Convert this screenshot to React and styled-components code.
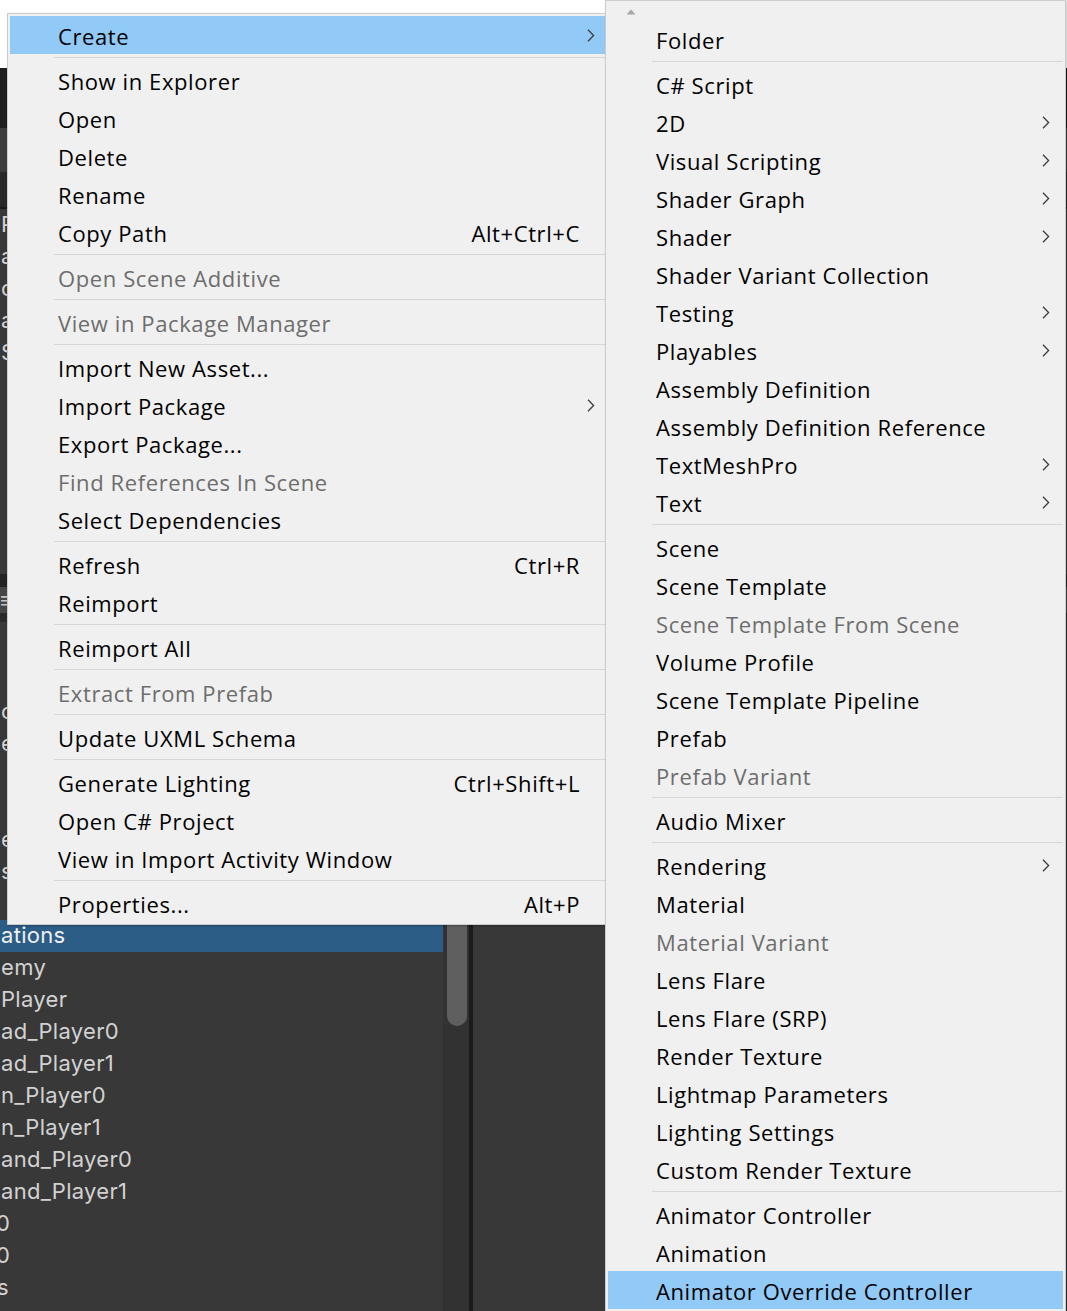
import React from 'react'
import styled, { createGlobalStyle } from 'styled-components'

const GlobalStyle = createGlobalStyle`
  html, body {
    margin: 0;
    padding: 0;
    background: #ffffff;
    overflow: hidden;
  }
`

const Page = styled.div`
  position: relative;
  width: 1067px;
  height: 1311px;
  overflow: hidden;
  background: #ffffff;
  display: flex;
  flex-direction: column;
`

const TopGap = styled.div`
  height: 68px;
  flex: none;
  background: #ffffff;
`

const Editor = styled.div`
  flex: 1;
  display: flex;
  flex-direction: column;
  background: #383838;
  font-family: Inter, "Noto Sans", sans-serif;
  font-size: 22px;
  letter-spacing: 0.3px;
  color: #d2d2d2;
`

const Bar = styled.div`
  flex: none;
  height: ${props => props.$h}px;
  background: ${props => props.$bg};
  border-bottom: ${props => props.$line ? '2px solid #1b1b1b' : 'none'};
  display: flex;
  align-items: center;
  color: #c4c4c4;
`

const RowList = styled.div`
  display: flex;
  flex-direction: column;
  padding-top: ${props => props.$pad || 0}px;
`

const Row = styled.div`
  height: 32px;
  flex: none;
  display: flex;
  align-items: center;
  white-space: nowrap;
  overflow: hidden;
  padding-left: 1px;
  padding-bottom: 3px;
  box-sizing: border-box;
  text-indent: ${props => props.$shift || 0}px;
  background: ${props => props.$selected ? '#2c5d87' : 'transparent'};
  color: ${props => props.$selected ? '#f0f0f0' : '#d2d2d2'};
`

const HierarchySection = styled.div`
  height: 365px;
  flex: none;
  overflow: hidden;
`

const ProjectSection = styled.div`
  flex: 1;
  display: flex;
  min-height: 0;
`

const ListPane = styled.div`
  width: 443px;
  flex: none;
  overflow: hidden;
`

const ScrollTrack = styled.div`
  width: 26px;
  flex: none;
  background: #323232;
  padding: 20px 2px 0 4px;
  box-sizing: border-box;
`

const ScrollThumb = styled.div`
  height: 384px;
  background: #5f5f5f;
  border-radius: 10px;
`

const Divider = styled.div`
  width: 4px;
  flex: none;
  background: #1b1b1b;
`

const RightPane = styled.div`
  flex: 1;
  background: #383838;
  border-right: 1px solid #2a2a2a;
`

const Menu = styled.div`
  position: absolute;
  left: ${props => props.$left}px;
  top: ${props => props.$top}px;
  width: ${props => props.$width}px;
  box-sizing: border-box;
  background: #f0f0f0;
  border: 1px solid #cccccc;
  padding: 2px;
  box-shadow: 1px 1px 2px rgba(0, 0, 0, 0.25);
  font-family: "Open Sans", "Noto Sans", sans-serif;
  font-size: 22px;
  letter-spacing: 0.6px;
  color: #000000;
  display: flex;
  flex-direction: column;
`

const ScrollUp = styled.div`
  height: 17px;
  display: flex;
  align-items: center;
  padding-left: 18px;
  box-sizing: border-box;
`

const Item = styled.div`
  height: 38px;
  flex: none;
  display: flex;
  align-items: center;
  padding-left: 48px;
  padding-top: 2px;
  box-sizing: border-box;
  background: ${props => props.$active ? '#91c9f7' : 'transparent'};
  color: ${props => props.$disabled ? '#6d6d6d' : '#000000'};
  white-space: nowrap;
`

const Label = styled.span`
  flex: 1;
  line-height: 1;
`

const Shortcut = styled.span`
  line-height: 1;
`

const ArrowCell = styled.span`
  width: 28px;
  flex: none;
  display: flex;
  justify-content: flex-end;
  padding-right: 13px;
  padding-bottom: 2px;
  box-sizing: border-box;
`

const Separator = styled.div`
  height: 1px;
  margin: 3px 0 3px 44px;
  background: #d7d7d7;
  flex: none;
`

const Chevron = () => (
  <svg width='8' height='13' viewBox='0 0 8 13'>
    <path d='M1 0.8 L6.6 6.5 L1 12.2' fill='none' stroke='#3c3c3c' strokeWidth='1.3' />
  </svg>
)

const UpTriangle = () => (
  <svg width='10' height='6' viewBox='0 0 10 6'>
    <path d='M0.5 5.5 L5 0.5 L9.5 5.5 Z' fill='#a6a6a6' />
  </svg>
)

const leftItems = [
  { label: 'Create', sub: true, active: true },
  '-',
  { label: 'Show in Explorer' },
  { label: 'Open' },
  { label: 'Delete' },
  { label: 'Rename' },
  { label: 'Copy Path', key: 'Alt+Ctrl+C' },
  '-',
  { label: 'Open Scene Additive', disabled: true },
  '-',
  { label: 'View in Package Manager', disabled: true },
  '-',
  { label: 'Import New Asset...' },
  { label: 'Import Package', sub: true },
  { label: 'Export Package...' },
  { label: 'Find References In Scene', disabled: true },
  { label: 'Select Dependencies' },
  '-',
  { label: 'Refresh', key: 'Ctrl+R' },
  { label: 'Reimport' },
  '-',
  { label: 'Reimport All' },
  '-',
  { label: 'Extract From Prefab', disabled: true },
  '-',
  { label: 'Update UXML Schema' },
  '-',
  { label: 'Generate Lighting', key: 'Ctrl+Shift+L' },
  { label: 'Open C# Project' },
  { label: 'View in Import Activity Window' },
  '-',
  { label: 'Properties...', key: 'Alt+P' }
]

const rightItems = [
  { label: 'Folder' },
  '-',
  { label: 'C# Script' },
  { label: '2D', sub: true },
  { label: 'Visual Scripting', sub: true },
  { label: 'Shader Graph', sub: true },
  { label: 'Shader', sub: true },
  { label: 'Shader Variant Collection' },
  { label: 'Testing', sub: true },
  { label: 'Playables', sub: true },
  { label: 'Assembly Definition' },
  { label: 'Assembly Definition Reference' },
  { label: 'TextMeshPro', sub: true },
  { label: 'Text', sub: true },
  '-',
  { label: 'Scene' },
  { label: 'Scene Template' },
  { label: 'Scene Template From Scene', disabled: true },
  { label: 'Volume Profile' },
  { label: 'Scene Template Pipeline' },
  { label: 'Prefab' },
  { label: 'Prefab Variant', disabled: true },
  '-',
  { label: 'Audio Mixer' },
  '-',
  { label: 'Rendering', sub: true },
  { label: 'Material' },
  { label: 'Material Variant', disabled: true },
  { label: 'Lens Flare' },
  { label: 'Lens Flare (SRP)' },
  { label: 'Render Texture' },
  { label: 'Lightmap Parameters' },
  { label: 'Lighting Settings' },
  { label: 'Custom Render Texture' },
  '-',
  { label: 'Animator Controller' },
  { label: 'Animation' },
  { label: 'Animator Override Controller', active: true }
]

// only the first few pixels of these rows peek out from behind the menu
const hierarchyRows = ['P', 'a', 'c', 'a', 'S', '', '', '', '', '', '', '']

const projectRows = [
  { text: '' },
  { text: '' },
  { text: 'c' },
  { text: 'e' },
  { text: '' },
  { text: '' },
  { text: 'e' },
  { text: 's' },
  { text: '' },
  { text: 'ations', selected: true },
  { text: 'emy' },
  { text: 'Player' },
  { text: 'ad_Player0' },
  { text: 'ad_Player1' },
  { text: 'n_Player0' },
  { text: 'n_Player1' },
  { text: 'and_Player0' },
  { text: 'and_Player1' },
  { text: '0', shift: -5 },
  { text: '0', shift: -5 },
  { text: 's', shift: -4 },
  { text: '' }
]

function MenuList({ items }) {
  return items.map((it, i) => {
    if (it === '-') return <Separator key={i} />
    return (
      <Item key={i} $active={it.active} $disabled={it.disabled}>
        <Label>{it.label}</Label>
        {it.key && <Shortcut>{it.key}</Shortcut>}
        <ArrowCell>{it.sub && <Chevron />}</ArrowCell>
      </Item>
    )
  })
}

export default function App() {
  return <>
    <GlobalStyle />
    <Page>
      <TopGap />
      <Editor>
        <Bar $h={60} $bg='#1e1e1e' />
        <Bar $h={44} $bg='#3c3c3c' />
        <Bar $h={35} $bg='#282828' $line />
        <HierarchySection>
          <RowList>
            {hierarchyRows.map((r, i) => <Row key={i}>{r}</Row>)}
          </RowList>
        </HierarchySection>
        <Bar $h={13} $bg='#232323' />
        <Bar $h={26} $bg='#464646'>&#8801;</Bar>
        <Bar $h={9} $bg='#2a2a2a' />
        <ProjectSection>
          <ListPane>
            <RowList $pad={10}>
              {projectRows.map((r, i) => (
                <Row key={i} $selected={r.selected} $shift={r.shift}>{r.text}</Row>
              ))}
            </RowList>
          </ListPane>
          <ScrollTrack>
            <ScrollThumb />
          </ScrollTrack>
          <Divider />
          <RightPane />
        </ProjectSection>
      </Editor>

      <Menu $left={7} $top={13} $width={604}>
        <MenuList items={leftItems} />
      </Menu>

      <Menu $left={605} $top={0} $width={461}>
        <ScrollUp>
          <UpTriangle />
        </ScrollUp>
        <MenuList items={rightItems} />
      </Menu>
    </Page>
  </>
}
